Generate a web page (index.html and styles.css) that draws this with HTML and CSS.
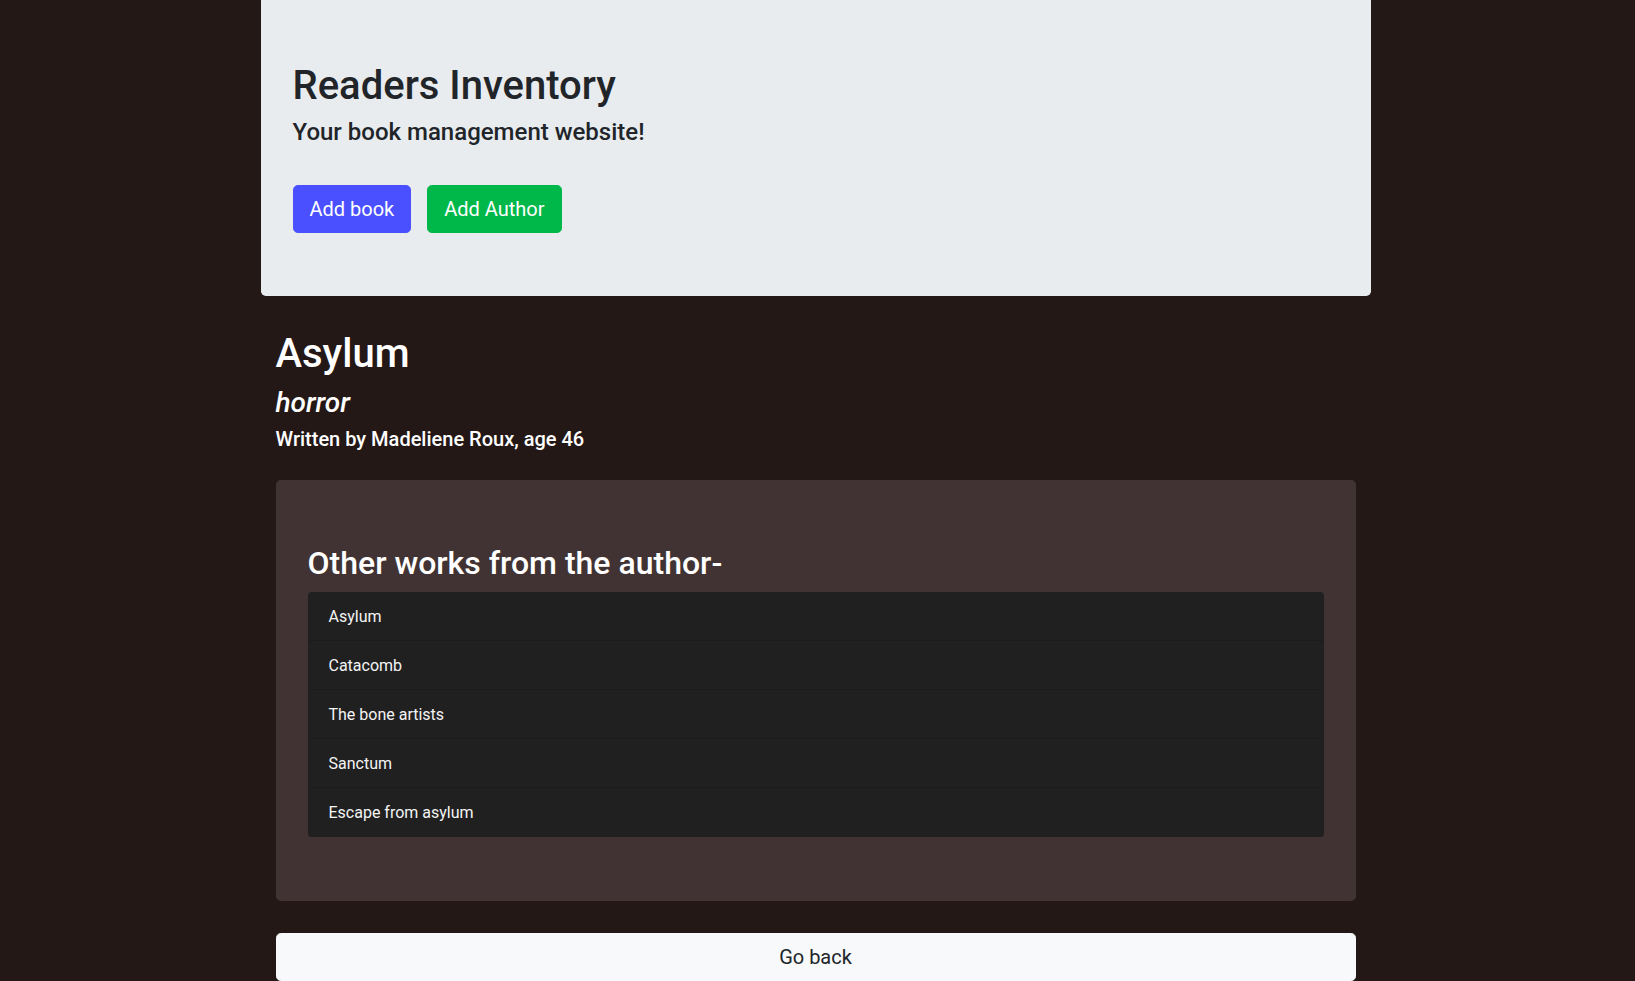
FILE: index.html
```html
<!DOCTYPE html>
<html lang="en">
<head>
<meta charset="utf-8">
<title>Readers Inventory</title>
<link rel="stylesheet" href="styles.css">
</head>
<body>
<div class="container">
  <header class="jumbotron hero">
    <h1 class="hero-title">Readers Inventory</h1>
    <h4 class="hero-sub">Your book management website!</h4>
    <div class="hero-actions">
      <a class="btn btn-lg btn-blue" href="#">Add book</a>
      <a class="btn btn-lg btn-green" href="#">Add Author</a>
    </div>
  </header>
  <main class="detail">
    <h1 class="book-title">Asylum</h1>
    <h3 class="book-genre"><em>horror</em></h3>
    <h5 class="book-author">Written by Madeliene Roux, age 46</h5>
    <section class="jumbotron works">
      <h2 class="works-title">Other works from the author-</h2>
      <ul class="list-group">
        <li class="list-item">Asylum</li>
        <li class="list-item">Catacomb</li>
        <li class="list-item">The bone artists</li>
        <li class="list-item">Sanctum</li>
        <li class="list-item">Escape from asylum</li>
      </ul>
    </section>
    <a class="btn btn-lg btn-light btn-block" href="#">Go back</a>
  </main>
</div>
</body>
</html>
```

FILE: styles.css
```css
* { box-sizing: border-box; }

html, body {
  margin: 0;
  padding: 0;
  overflow: hidden;
}

body {
  background: #241817;
  color: #212529;
  font-family: Roboto, "Liberation Sans", sans-serif;
  font-size: 16px;
  line-height: 1.5;
}

.container {
  width: 1110px;
  margin: 0 auto;
  padding-left: 0;
  position: relative;
  left: -2px;
}

h1, h2, h3, h4, h5 {
  margin: 0 0 8px;
  font-weight: 500;
  line-height: 1.2;
}

.jumbotron {
  border-radius: 4.8px;
  padding: 64px 32px;
}

.hero {
  background: #e9ecef;
  padding-top: 62px;
  padding-bottom: 63px;
  margin-bottom: 34px;
  border-top-left-radius: 0;
  border-top-right-radius: 0;
}

.hero-title {
  font-size: 40px;
  color: #212529;
}

.hero-sub {
  font-size: 24px;
  color: #212529;
}

.hero-actions {
  display: flex;
  gap: 16px;
  margin-top: 38px;
}

.btn {
  display: inline-block;
  text-decoration: none;
  border: 1px solid transparent;
  text-align: center;
  font-weight: 400;
}

.btn-lg {
  font-size: 20px;
  line-height: 1.5;
  padding: 8px 16px;
  border-radius: 4.8px;
}

.btn-blue {
  background: #4a50ff;
  border-color: #4a50ff;
  color: #fff;
}

.btn-green {
  background: #00b84a;
  border-color: #00b84a;
  color: #fff;
}

.btn-light {
  background: #f8f9fa;
  border-color: #f8f9fa;
  color: #212529;
}

.btn-block {
  display: block;
  width: 100%;
}

.detail {
  padding: 0 15px;
  color: #fff;
}

.book-title {
  font-size: 40px;
}

.book-genre {
  font-size: 28px;
}

.book-author {
  font-size: 20px;
}

.works {
  background: #413333;
  margin-top: 29px;
  margin-bottom: 32px;
}

.works-title {
  font-size: 32px;
  color: #fff;
  margin-bottom: 9px;
}

.list-group {
  list-style: none;
  margin: 0;
  padding: 0;
  background: #202021;
  border-radius: 4px;
  overflow: hidden;
}

.list-item {
  padding: 13px 21px 11px;
  color: #f4f4f4;
  border-bottom: 1px solid #1c1c1d;
}

.list-item:last-child {
  border-bottom: 1px solid #202021;
}
```
